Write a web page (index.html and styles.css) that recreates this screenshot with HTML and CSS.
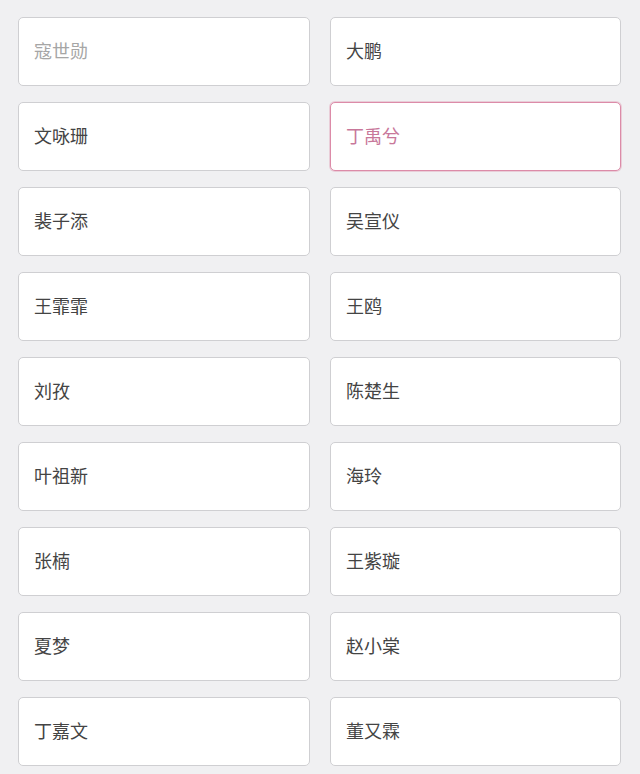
FILE: index.html
```html
<!DOCTYPE html>
<html lang="zh-CN">
<head>
  <meta charset="UTF-8">
  <meta name="viewport" content="width=device-width, initial-scale=1.0">
  <title>名单</title>
  <link rel="stylesheet" href="styles.css">
</head>
<body>
  <!-- 两列输入框 -->
  <div class="name-grid">
    <div class="name-box placeholder">寇世勋</div>
    <div class="name-box">大鹏</div>
    <div class="name-box">文咏珊</div>
    <div class="name-box active">丁禹兮</div>
    <div class="name-box">裴子添</div>
    <div class="name-box">吴宣仪</div>
    <div class="name-box">王霏霏</div>
    <div class="name-box">王鸥</div>
    <div class="name-box">刘孜</div>
    <div class="name-box">陈楚生</div>
    <div class="name-box">叶祖新</div>
    <div class="name-box">海玲</div>
    <div class="name-box">张楠</div>
    <div class="name-box">王紫璇</div>
    <div class="name-box">夏梦</div>
    <div class="name-box">赵小棠</div>
    <div class="name-box">丁嘉文</div>
    <div class="name-box">董又霖</div>
  </div>
</body>
</html>
```

FILE: styles.css
```css
body {
  margin: 0;
  background: #f0f0f2;
  font-family: "Noto Sans CJK SC", "Noto Sans", sans-serif;
}
.name-grid {
  display: grid;
  grid-template-columns: 292px 291px;
  grid-auto-rows: 69px;
  column-gap: 20px;
  row-gap: 16px;
  padding: 17px 0 0 18px;
}
.name-box {
  background: #fff;
  border: 1px solid #cfcfd2;
  border-radius: 5px;
  box-sizing: border-box;
  display: flex;
  align-items: center;
  padding: 0 0 3px 15px;
  font-size: 18px;
  color: #444;
}
.name-box.placeholder {
  color: #a6a6a6;
}
.name-box.active {
  border-color: #dc8ba8;
  color: #c8779a;
  box-shadow: 0 0 0 1px rgba(220, 139, 168, 0.35);
}
```
